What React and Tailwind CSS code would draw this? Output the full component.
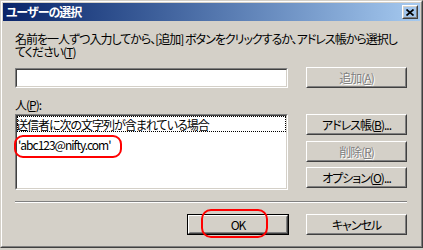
function Raised({ className, children }) {
  return (
    <div className={"border border-t-white border-l-white border-b-[#404040] border-r-[#404040] " + className}>
      <div className="w-full h-full border border-t-[#D4D0C8] border-l-[#D4D0C8] border-b-[#808080] border-r-[#808080] flex items-center justify-center">
        {children}
      </div>
    </div>
  );
}

function Sunken({ className, children }) {
  return (
    <div className={"border border-t-[#808080] border-l-[#808080] border-b-white border-r-white " + className}>
      <div className="w-full h-full border border-t-[#404040] border-l-[#404040] border-b-[#D4D0C8] border-r-[#D4D0C8] bg-white overflow-hidden">
        {children}
      </div>
    </div>
  );
}

function U({ children }) {
  return <span className="underline underline-offset-[1px]">{children}</span>;
}

export default function App() {
  return (
    <div className="w-[423px] h-[250px] bg-[#D4D0C8] font-['Noto_Sans_CJK_JP',sans-serif] [font-feature-settings:'palt'] text-[12px] leading-[13px] tracking-[-1px] text-black overflow-hidden relative">
      <div className="w-[423px] h-[248px] border border-t-[#D4D0C8] border-l-[#D4D0C8] border-b-[#404040] border-r-[#404040]">
        <div className="h-full border border-t-white border-l-white border-b-[#808080] border-r-[#808080] p-px flex flex-col">
          {/* Title bar */}
          <div className="h-[18px] shrink-0 flex items-center justify-between bg-linear-to-r from-[#0A246A] to-[#A6CAF0] pl-[3px] pr-[2px]">
            <span className="text-white font-bold text-[12px] leading-none">ユーザーの選択</span>
            <Raised className="w-[16px] h-[14px]">
              <svg width="8" height="7" viewBox="0 0 8 7">
                <path d="M0.5 0.5 L7.5 6.5 M7.5 0.5 L0.5 6.5" stroke="black" strokeWidth="1.7" fill="none" />
              </svg>
            </Raised>
          </div>

          {/* Content */}
          <div className="flex flex-col pl-[12px] pr-[13px]">
            <div className="mt-[11px] whitespace-nowrap">
              <div>名前を一人ずつ入力してから、[追加] ボタンをクリックするか、アドレス帳から選択し</div>
              <div>てください(<U>T</U>)</div>
            </div>

            <div className="mt-[9px] flex items-start justify-between">
              <Sunken className="mt-px w-[273px] h-[20px]" />
              <Raised className="w-[101px] h-[21px]">
                <span className="text-[#808080] [text-shadow:1px_1px_0_#fff]">
                  追加(<U>A</U>)
                </span>
              </Raised>
            </div>

            <div className="mt-[10px] h-[14px]">
              人(<U>P</U>):
            </div>

            <div className="mt-[2px] flex items-start justify-between">
              <Sunken className="w-[273px] h-[76px]">
                <div className="h-[16px] border border-dotted border-black flex items-center whitespace-nowrap">
                  <span className="-ml-[2px]">送信者に次の文字列が含まれている場合</span>
                </div>
                <div className="mt-[6px] pl-[1px] whitespace-nowrap">'abc123@nifty.com'</div>
              </Sunken>
              <div className="flex flex-col">
                <Raised className="w-[101px] h-[21px]">
                  <span>
                    アドレス帳(<U>B</U>)...
                  </span>
                </Raised>
                <Raised className="mt-[6px] w-[101px] h-[21px]">
                  <span className="text-[#808080] [text-shadow:1px_1px_0_#fff]">
                    削除(<U>R</U>)
                  </span>
                </Raised>
                <Raised className="mt-[5px] w-[101px] h-[21px]">
                  <span>
                    オプション(<U>O</U>)...
                  </span>
                </Raised>
              </div>
            </div>

            <div className="mt-[11px] h-[2px] border-t border-t-[#808080] border-b border-b-white" />

            <div className="mt-[11px] flex justify-end gap-[17px]">
              <div className="border border-black w-[102px] h-[21px]">
                <Raised className="w-full h-full">
                  <span>OK</span>
                </Raised>
              </div>
              <Raised className="w-[101px] h-[21px]">
                <span>キャンセル</span>
              </Raised>
            </div>
          </div>
        </div>
      </div>

      {/* Red annotation marks */}
      <div className="absolute left-[14px] top-[135px] w-[108px] h-[23px] border-2 border-[#FF0000] rounded-[9px]" />
      <div className="absolute left-[201px] top-[209px] w-[67px] h-[29px] border-2 border-[#FF0000] rounded-[10px]" />
    </div>
  );
}
